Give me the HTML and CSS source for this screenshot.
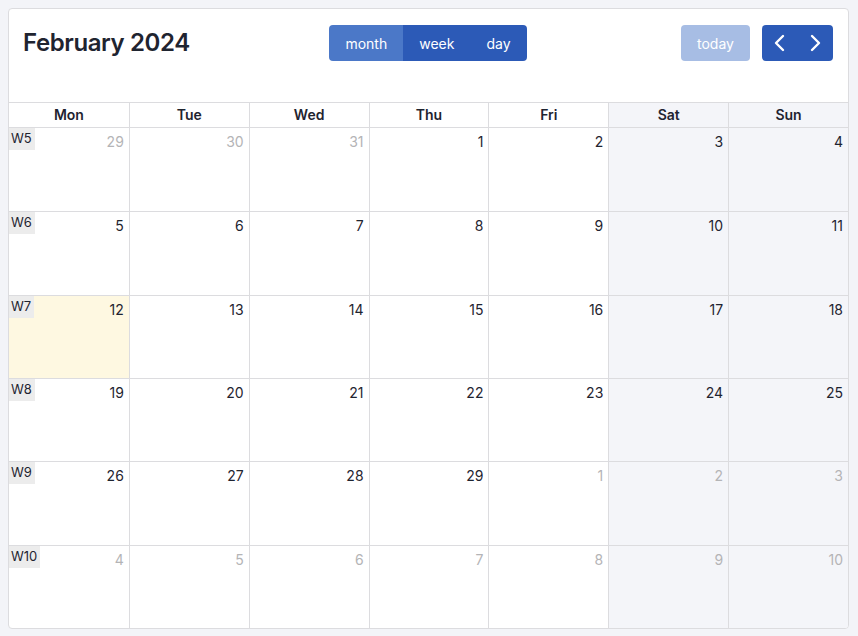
FILE: index.html
```html
<!DOCTYPE html>
<html>
<head>
<meta charset="utf-8">
<link rel="stylesheet" href="styles.css">
</head>
<body>
<div class="card">
  <div class="toolbar">
    <h1 class="title">February 2024</h1>
    <div class="group">
      <button class="btn active">month</button>
      <button class="btn">week</button>
      <button class="btn">day</button>
    </div>
    <div class="right">
      <button class="btn today">today</button>
      <div class="group nav">
        <button class="btn icon"><svg width="14" height="20" viewBox="0 0 14 20"><polyline points="10,3 3,10 10,17" fill="none" stroke="#fff" stroke-width="2.4" stroke-linecap="round" stroke-linejoin="round"/></svg></button>
        <button class="btn icon"><svg width="14" height="20" viewBox="0 0 14 20"><polyline points="4,3 11,10 4,17" fill="none" stroke="#fff" stroke-width="2.4" stroke-linecap="round" stroke-linejoin="round"/></svg></button>
      </div>
    </div>
  </div>
  <div class="cal">
    <div class="head">
      <div class="hd">Mon</div><div class="hd">Tue</div><div class="hd">Wed</div><div class="hd">Thu</div><div class="hd">Fri</div><div class="hd we">Sat</div><div class="hd we">Sun</div>
    </div>
    <div class="body">
      <div class="c"><span class="wk">W5</span><span class="n o">29</span></div>
      <div class="c"><span class="n o">30</span></div>
      <div class="c"><span class="n o">31</span></div>
      <div class="c"><span class="n">1</span></div>
      <div class="c"><span class="n">2</span></div>
      <div class="c we"><span class="n">3</span></div>
      <div class="c we"><span class="n">4</span></div>

      <div class="c"><span class="wk">W6</span><span class="n">5</span></div>
      <div class="c"><span class="n">6</span></div>
      <div class="c"><span class="n">7</span></div>
      <div class="c"><span class="n">8</span></div>
      <div class="c"><span class="n">9</span></div>
      <div class="c we"><span class="n">10</span></div>
      <div class="c we"><span class="n">11</span></div>

      <div class="c today-cell"><span class="wk">W7</span><span class="n">12</span></div>
      <div class="c"><span class="n">13</span></div>
      <div class="c"><span class="n">14</span></div>
      <div class="c"><span class="n">15</span></div>
      <div class="c"><span class="n">16</span></div>
      <div class="c we"><span class="n">17</span></div>
      <div class="c we"><span class="n">18</span></div>

      <div class="c"><span class="wk">W8</span><span class="n">19</span></div>
      <div class="c"><span class="n">20</span></div>
      <div class="c"><span class="n">21</span></div>
      <div class="c"><span class="n">22</span></div>
      <div class="c"><span class="n">23</span></div>
      <div class="c we"><span class="n">24</span></div>
      <div class="c we"><span class="n">25</span></div>

      <div class="c"><span class="wk">W9</span><span class="n">26</span></div>
      <div class="c"><span class="n">27</span></div>
      <div class="c"><span class="n">28</span></div>
      <div class="c"><span class="n">29</span></div>
      <div class="c"><span class="n o">1</span></div>
      <div class="c we"><span class="n o">2</span></div>
      <div class="c we"><span class="n o">3</span></div>

      <div class="c"><span class="wk">W10</span><span class="n o">4</span></div>
      <div class="c"><span class="n o">5</span></div>
      <div class="c"><span class="n o">6</span></div>
      <div class="c"><span class="n o">7</span></div>
      <div class="c"><span class="n o">8</span></div>
      <div class="c we"><span class="n o">9</span></div>
      <div class="c we"><span class="n o">10</span></div>
    </div>
  </div>
</div>
</body>
</html>
```

FILE: styles.css
```css
* { box-sizing: border-box; }
html, body { height: 100%; }
body {
  margin: 0;
  padding: 8px;
  background: #f3f4f8;
  font-family: Inter, "Noto Sans", sans-serif;
  color: #1f2430;
}
.card {
  width: 841px;
  height: 621px;
  background: #fff;
  border: 1px solid #dcdcdf;
  border-radius: 4px;
  display: flex;
  flex-direction: column;
  overflow: hidden;
}
.toolbar {
  height: 93px;
  display: grid;
  grid-template-columns: 1fr auto 1fr;
  align-items: start;
  padding: 16px 15px 0 14px;
}
.title {
  margin: 0;
  font-size: 24px;
  font-weight: 600;
  line-height: 36px;
  color: #1f2430;
  letter-spacing: -0.4px;
}
.group { display: flex; }
.btn {
  font-family: inherit;
  border: none;
  color: #fff;
  background: #2c5ab7;
  font-size: 14px;
  height: 36px;
  padding: 0 16px;
  margin: 0;
  cursor: pointer;
}
.group .btn:first-child { border-radius: 4px 0 0 4px; }
.group .btn:last-child { border-radius: 0 4px 4px 0; }
.btn.active { background: #4b78c8; }
.right { display: flex; gap: 12px; justify-content: flex-end; }
.btn.today {
  background: #a7bde4;
  border-radius: 4px;
  width: 69px;
  padding: 0;
}
.nav .btn.icon {
  padding: 0;
  width: 35.5px;
  display: flex;
  align-items: center;
  justify-content: center;
}
.cal { flex: 1; display: flex; flex-direction: column; border-top: 1px solid #dcdcdf; }
.head {
  display: grid;
  grid-template-columns: repeat(7, 1fr);
  height: 25px;
  border-bottom: 1px solid #dcdcdf;
}
.hd {
  font-size: 14px;
  font-weight: 600;
  text-align: center;
  line-height: 24px;
  border-left: 1px solid #dcdcdf;
}
.hd:first-child { border-left: none; }
.we { background: #f4f5f9; }
.body {
  flex: 1;
  display: grid;
  grid-template-columns: repeat(7, 1fr);
  grid-template-rows: repeat(6, 1fr);
}
.c {
  position: relative;
  border-left: 1px solid #dcdcdf;
  border-top: 1px solid #dcdcdf;
  display: flex;
  justify-content: flex-end;
  align-items: flex-start;
}
.c:nth-child(7n+1) { border-left: none; }
.c:nth-child(-n+7) { border-top: none; }
.today-cell { background: #fef8e1; }
.n {
  font-size: 14px;
  line-height: 17px;
  padding: 5px 5px 0 0;
  color: #1f2430;
}
.n.o { color: #b4b4b6; }
.wk {
  position: absolute;
  left: 0;
  top: 0;
  background: #ececec;
  font-size: 13px;
  line-height: 17px;
  padding: 2px 3px 3px 2px;
  color: #1f2430;
}
```
